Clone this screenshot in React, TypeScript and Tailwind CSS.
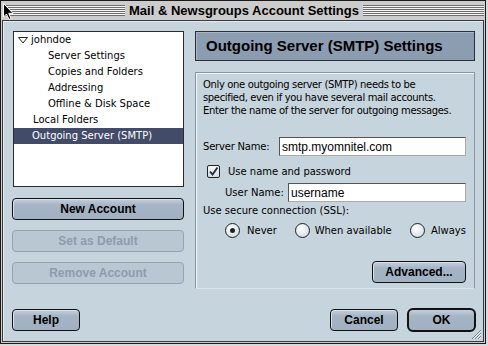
import React from "react";

const geneva = "font-['DejaVu_Sans',sans-serif] text-[10px] leading-[12px] text-black";
const charcoal = "font-['Liberation_Sans',Arial,sans-serif] font-bold";

function Stripes() {
  return (
    <div className="flex-1 h-[11px] bg-[repeating-linear-gradient(to_bottom,#6e6e6e_0px,#6e6e6e_1px,#f4f4f4_1px,#f4f4f4_2px)]" />
  );
}

function Btn({
  label,
  w,
  disabled,
}: {
  label: string;
  w: string;
  disabled?: boolean;
}) {
  return (
    <div
      className={`${w} h-[22px] rounded-[4px] border flex items-center justify-center ${charcoal} text-[12px] ${
        disabled
          ? "border-[#95a4b2] bg-[#b9c7d3] text-[#8d9cab]"
          : "border-[#111] bg-[linear-gradient(to_bottom,#c3cfdb,#a6b5c6_30%,#a2b1c2)] text-black shadow-[inset_1px_1px_0_#d8e1ea]"
      }`}
    >
      {label}
    </div>
  );
}

function TreeItem({
  label,
  indent,
  selected,
  twisty,
}: {
  label: string;
  indent: string;
  selected?: boolean;
  twisty?: boolean;
}) {
  return (
    <div
      className={`relative h-[16px] flex items-center ${indent} ${geneva} ${
        selected ? "bg-[#424b68] !text-white" : ""
      }`}
    >
      {twisty && (
        <svg
          className="absolute left-[4px] top-[5px]"
          width="10"
          height="7"
          viewBox="0 0 10 7"
        >
          <path d="M0.5 0.5 L9.5 0.5 L5 6 Z" fill="#fff" stroke="#222" strokeWidth="1" />
        </svg>
      )}
      <span>{label}</span>
    </div>
  );
}

function Radio({ checked }: { checked?: boolean }) {
  return (
    <div className="w-[15px] h-[15px] rounded-full border border-[#222] bg-[radial-gradient(circle_at_40%_35%,#ffffff,#dfe6ec_60%,#c3ced8)] flex items-center justify-center shrink-0">
      {checked && <div className="w-[5px] h-[5px] rounded-full bg-[#222]" />}
    </div>
  );
}

export default function App() {
  return (
    <div className="relative w-[488px] h-[346px] bg-[#dadada] overflow-hidden">
      <div className="flex flex-col w-[486px] h-[344px] border border-[#1b1b1b] bg-[#cccccc]">
        {/* Title bar */}
        <div className="flex items-center h-[19px] pl-[3px] pr-[1px] gap-[4px]">
          <Stripes />
          <span className={`${charcoal} text-[13px] leading-[15px] text-black`}>
            Mail &amp; Newsgroups Account Settings
          </span>
          <Stripes />
        </div>
        {/* Body */}
        <div className="relative flex-1 mx-[1px] mb-[1px] border border-[#3a3a3a] bg-[#c6d4dd] shadow-[inset_1px_1px_0_#e4ecf1] flex flex-col pl-[9px] pt-[10px]">
          <div className="flex gap-[11px]">
            {/* Left column */}
            <div className="w-[172px] flex flex-col">
              <div className="ml-[1px] w-[171px] h-[156px] border border-[#2b2b2b] bg-white">
                <TreeItem label="johndoe" indent="pl-[17px]" twisty />
                <TreeItem label="Server Settings" indent="pl-[34px]" />
                <TreeItem label="Copies and Folders" indent="pl-[34px]" />
                <TreeItem label="Addressing" indent="pl-[34px]" />
                <TreeItem label="Offline & Disk Space" indent="pl-[34px]" />
                <TreeItem label="Local Folders" indent="pl-[19px]" />
                <TreeItem label="Outgoing Server (SMTP)" indent="pl-[18px]" selected />
              </div>
              <div className="mt-[11px] flex flex-col gap-[10px]">
                <Btn label="New Account" w="w-[172px]" />
                <Btn label="Set as Default" w="w-[172px]" disabled />
                <Btn label="Remove Account" w="w-[172px]" disabled />
              </div>
            </div>
            {/* Right column */}
            <div className="w-[280px] flex flex-col">
              <div className="h-[30px] border border-[#2f2f2f] bg-[#8c9cb1] shadow-[inset_1px_1px_0_#a9b6c7] flex items-center pl-[10px]">
                <span className={`${charcoal} text-[15px] text-black`}>
                  Outgoing Server (SMTP) Settings
                </span>
              </div>
              <div className="mt-[11px] h-[217px] border border-[#8996a2] border-b-[#dbe4ea] shadow-[inset_1px_1px_0_#eef3f6] flex flex-col pl-[7px] pr-[8px] pt-[5px]">
                <p className="font-['DejaVu_Sans',sans-serif] text-[10px] leading-[13px] text-black whitespace-nowrap tracking-[-0.35px]">
                  Only one outgoing server (SMTP) needs to be
                  <br />
                  specified, even if you have several mail accounts.
                  <br />
                  Enter the name of the server for outgoing messages.
                </p>
                <div className="mt-[20px] flex items-center">
                  <span className={`${geneva} w-[76px] tracking-[-0.2px]`}>Server Name:</span>
                  <div className="flex-1 h-[19px] border border-[#555] border-r-[#aaa] border-b-[#aaa] bg-white flex items-center pl-[2px] font-['Liberation_Sans',Arial,sans-serif] text-[12px] text-black">
                    smtp.myomnitel.com
                  </div>
                </div>
                <div className="mt-[9px] flex items-center h-[13px]">
                  <div className="ml-[4px] w-[13px] h-[13px] rounded-[2px] border border-[#222] bg-[linear-gradient(to_bottom,#f4f7f9,#d5dee5)] flex items-center justify-center">
                    <svg width="11" height="11" viewBox="0 0 11 11">
                      <path d="M2 5.5 L4.5 8.5 L9.5 1.5" fill="none" stroke="#1d2a3a" strokeWidth="1.8" />
                    </svg>
                  </div>
                  <span className={`${geneva} ml-[8px]`}>Use name and password</span>
                </div>
                <div className="mt-[5px] flex items-center">
                  <span className={`${geneva} ml-[22px] w-[63px]`}>User Name:</span>
                  <div className="flex-1 h-[19px] border border-[#555] border-r-[#aaa] border-b-[#aaa] bg-white flex items-center pl-[2px] font-['Liberation_Sans',Arial,sans-serif] text-[12px] text-black">
                    username
                  </div>
                </div>
                <p className={`${geneva} mt-[3px]`}>Use secure connection (SSL):</p>
                <div className="mt-[6px] flex items-center h-[15px] pl-[22px]">
                  <Radio checked />
                  <span className={`${geneva} ml-[7px] w-[48px]`}>Never</span>
                  <Radio />
                  <span className={`${geneva} ml-[5px] w-[96px]`}>When available</span>
                  <Radio />
                  <span className={`${geneva} ml-[6px]`}>Always</span>
                </div>
                <div className="mt-[23px] flex justify-end">
                  <Btn label="Advanced..." w="w-[94px]" />
                </div>
              </div>
            </div>
          </div>
          {/* Bottom row */}
          <div className="mt-[19px] h-[24px] flex items-center pr-[7px]">
            <Btn label="Help" w="w-[68px]" />
            <div className="flex-1" />
            <Btn label="Cancel" w="w-[68px]" />
            <div className="ml-[9px] w-[69px] h-[24px] rounded-[6px] border-[2px] border-[#111] bg-[linear-gradient(to_bottom,#c3cfdb,#a6b5c6_30%,#a2b1c2)] flex items-center justify-center">
              <span className={`${charcoal} text-[12px] text-black`}>OK</span>
            </div>
          </div>
          {/* Resize grip */}
          <svg className="absolute right-[1px] bottom-[1px]" width="12" height="12" viewBox="0 0 12 12">
            <path d="M11 2 L2 11 M11 5 L5 11 M11 8 L8 11" stroke="#6f7d89" strokeWidth="1" />
            <path d="M11 3 L3 11 M11 6 L6 11 M11 9 L9 11" stroke="#f2f6f8" strokeWidth="1" />
          </svg>
        </div>
      </div>
      {/* Mouse cursor */}
      <svg className="absolute left-[3px] top-[3px]" width="12" height="18" viewBox="0 0 12 18">
        <path
          d="M0.5 0.5 L0.5 14 L3.5 11 L6 16.5 L8 15.5 L5.7 10.3 L10 10.3 Z"
          fill="#000"
          stroke="#fff"
          strokeWidth="1"
        />
      </svg>
    </div>
  );
}
